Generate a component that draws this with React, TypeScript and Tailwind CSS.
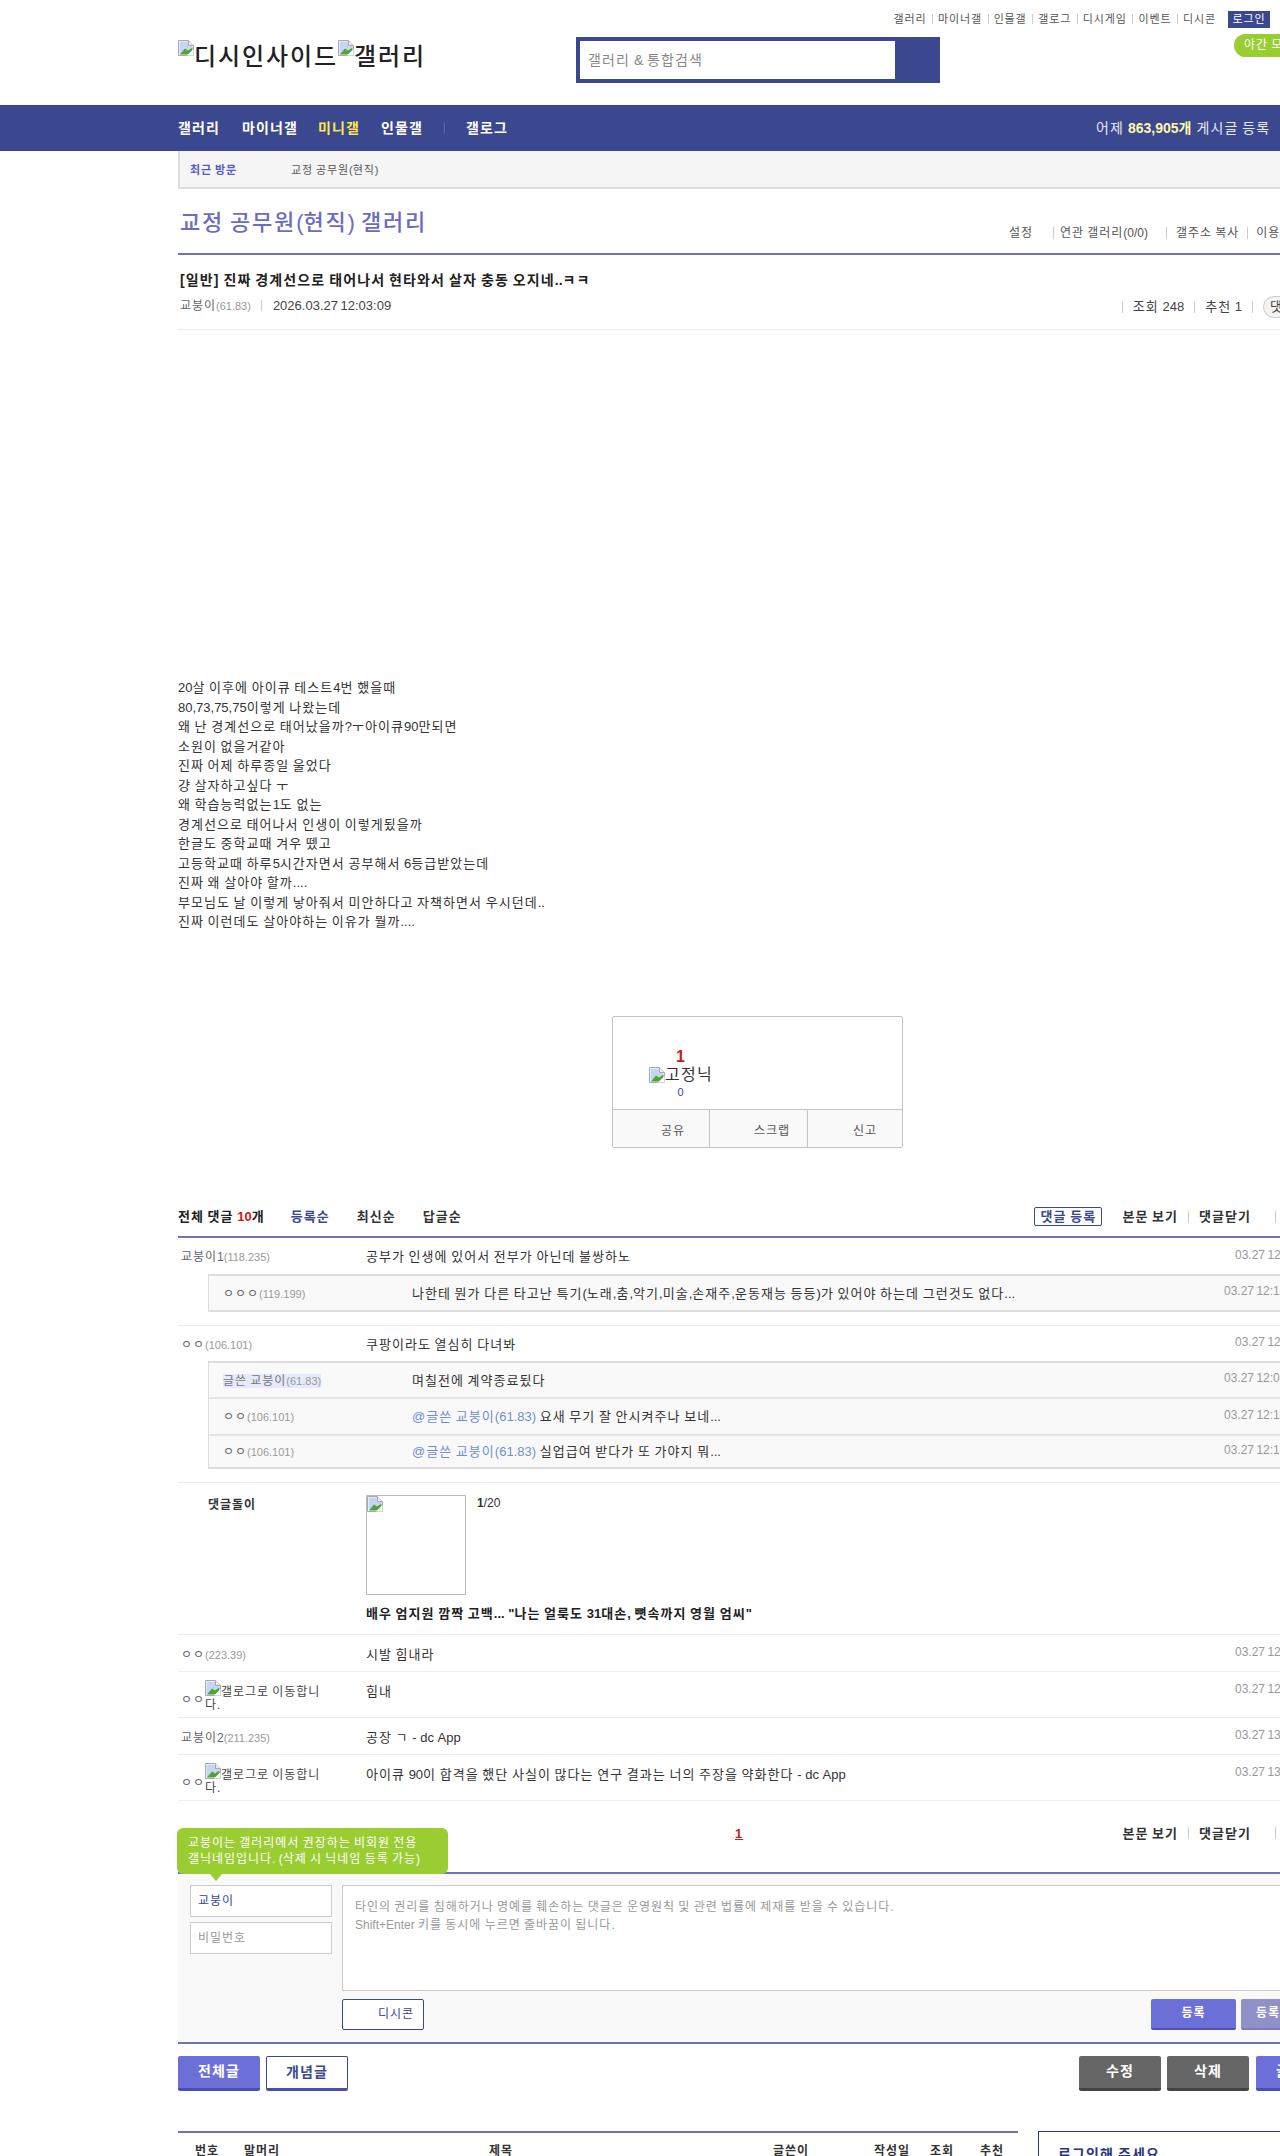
import type { ReactNode } from "react"

const BrokenImg = ({ className = "" }: { className?: string }) => (
  <svg width="16" height="16" viewBox="0 0 16 16" className={`inline-block shrink-0 align-baseline ${className}`}>
    <path d="M0.5 0.5H10.5L15.5 5.5V15.5H0.5Z" fill="#fff" stroke="#a9a9a9" />
    <path d="M1.5 1.5H10V6H14.5V9L9 14.5H1.5Z" fill="#c5d6f2" />
    <path d="M2 14.5L7 8.5L10 10.5L14.5 7.5V14.5Z" fill="#4ea33b" />
    <path d="M9 15.5L15.5 9V15.5Z" fill="#fff" />
    <path d="M10.5 0.5V5.5H15.5" fill="#eee" stroke="#a9a9a9" />
  </svg>
)

const Latin = ({ children }: { children: ReactNode }) => (
  <span className="!tracking-normal ![word-spacing:normal]">{children}</span>
)

const K = ({ t }: { t: string }) => (
  <>
    {t.split(/([0-9A-Za-z,.:&+\-()"/?]+)/).map((part, i) => (i % 2 ? <Latin key={i}>{part}</Latin> : part))}
  </>
)

const Sep = () => <span className="inline-block w-px h-[10px] bg-[#ccc]" />

const Name = ({ nick, ip }: { nick: string; ip: string }) => (
  <span className="text-[12px] text-[#666]">
    <K t={nick} />
    <span className="text-[11px] text-[#999] !tracking-normal">({ip})</span>
  </span>
)

const Row = ({ name, text, date, h = "h-[37px]" }: { name: ReactNode; text: string; date: string; h?: string }) => (
  <div className={`flex ${h} border-b border-[#eee] pl-[3px]`}>
    <div className="w-[185px] pt-[11px] leading-[18px]">{name}</div>
    <div className="flex-1 pt-[10px] text-[13px] leading-[19px] text-[#333]"><K t={text} /></div>
    <div className="w-[103px] pt-[9px] text-[12px] leading-[16px] text-[#999] !tracking-normal">{date}</div>
  </div>
)

const Reply = ({ name, text, date, h, last }: { name: ReactNode; text: ReactNode; date: string; h: string; last?: boolean }) => (
  <div className={`flex ${h} items-center pl-[14px] pt-[2px] ${last ? "" : "border-b-2 border-[#e5e5e5]"}`}>
    <div className="w-[189px]">{name}</div>
    <div className="flex-1 text-[13px] text-[#333]">{text}</div>
    <div className="w-[113px] -mt-[5px] text-[12px] text-[#999] !tracking-normal">{date}</div>
  </div>
)

const Mention = () => <span className="text-[#6f8fd0]"><K t="@글쓴 교붕이(61.83) " /></span>

const MovedName = () => (
  <div className="flex items-center text-[12px] text-[#666] -mt-[3px]">
    <span className="mt-[8px]">ㅇㅇ</span>
    <span className="w-[130px] text-[12px] leading-[13px] text-[#444]">
      <BrokenImg />갤로그로 이동합니다.
    </span>
  </div>
)

const topLinks = ["갤러리", "마이너갤", "인물갤", "갤로그", "디시게임", "이벤트", "디시콘"]

const ViewButtons = () => (
  <div className="flex items-center text-[13px] font-bold text-[#333]">
    <span>본문 보기</span>
    <span className="mx-[10px] h-[12px] w-px bg-[#ccc]" />
    <span>댓글닫기</span>
    <span className="ml-[24px] h-[12px] w-px bg-[#ccc]" />
    <span className="ml-[10px]">새로고침</span>
  </div>
)

const bodyLines = [
  "20살 이후에 아이큐 테스트4번 했을때",
  "80,73,75,75이렇게 나왔는데",
  "왜 난 경계선으로 태어났을까?ㅜ아이큐90만되면",
  "소원이 없을거같아",
  "진짜 어제 하루종일 울었다",
  "걍 살자하고싶다 ㅜ",
  "왜 학습능력없는1도 없는",
  "경계선으로 태어나서 인생이 이렇게됬을까",
  "한글도 중학교때 겨우 뗐고",
  "고등학교때 하루5시간자면서 공부해서 6등급받았는데",
  "진짜 왜 살아야 할까....",
  "부모님도 날 이렇게 낳아줘서 미안하다고 자책하면서 우시던데..",
  "진짜 이런데도 살아야하는 이유가 뭘까....",
]

export default function App() {
  return (
    <div className="h-[2156px] w-[1280px] overflow-hidden bg-white text-[13px] text-[#333] font-['Liberation_Sans','Noto_Sans_CJK_KR',sans-serif] [&_*]:tracking-[0.08em] [&_*]:[word-spacing:-0.08em]">
      {/* 헤더 */}
      <div className="h-[105px] pl-[178px]">
        <div className="relative w-[1160px]">
          <div className="flex h-[37px] w-[1092px] items-center justify-end gap-[5px] pb-[9px] pt-[10px] text-[11px] text-[#555]">
            {topLinks.map((t) => (
              <span key={t} className="flex items-center gap-[5.6px]">
                {t}
                {t !== "디시콘" && <Sep />}
              </span>
            ))}
            <span className="ml-[7px] flex h-[17px] w-[42px] items-center justify-center bg-[#3b4890] text-white">로그인</span>
          </div>
          <div className="absolute left-[1056px] top-[34px] h-[23px] w-[100px] rounded-l-[12px] bg-[#9acd32] pl-[10px] text-[12px] leading-[23px] text-white">야간 모드</div>
          <div className="flex items-start">
            <div className="flex w-[398px] items-start pt-[6px] text-[24px] font-medium leading-[28px] text-[#222]">
              <BrokenImg className="-mt-[3px]" />디시인사이드<BrokenImg className="-mt-[3px]" />갤러리
            </div>
            <div className="flex h-[46px] w-[364px] bg-[#3b4890] py-[4px] pl-[4px]">
              <div className="flex h-[38px] w-[315px] items-center bg-white pl-[8px] text-[14px] text-[#888]"><span><K t="갤러리 & 통합검색" /></span></div>
            </div>
          </div>
        </div>
      </div>

      {/* 내비 */}
      <div className="h-[46px] bg-[#3b4890] pl-[178px]">
        <div className="flex h-full w-[1160px] items-center text-[14px] font-bold text-white">
          <span>갤러리</span>
          <span className="ml-[22px]">마이너갤</span>
          <span className="ml-[20px] text-[#ffe94e]">미니갤</span>
          <span className="ml-[21px]">인물갤</span>
          <span className="ml-[21px] h-[12px] w-px bg-[#5a66a8]" />
          <span className="ml-[21px]">갤로그</span>
          <span className="ml-[588px] text-[14px] font-normal text-[#e8e8f5]">
            어제 <b className="text-[#fff7a8]"><K t="863,905개" /></b> 게시글 등록
          </span>
        </div>
      </div>

      <div className="pl-[178px]">
        <div className="w-[1160px]">
          {/* 최근 방문 */}
          <div className="flex h-[38px] items-center border-b-2 border-l-2 border-[#ddd] bg-[#f5f5f5] pl-[10px] pt-[2px] text-[11px]">
            <span className="w-[101px] font-bold text-[#5858c8]">최근 방문</span>
            <span className="text-[#555]"><K t="교정 공무원(현직)" /></span>
          </div>

          {/* 갤러리 타이틀 */}
          <div className="flex h-[66px] items-start border-b-2 border-[#7272b8] pl-[2px]">
            <h2 className="pt-[18px] text-[22px] font-medium leading-[32px] text-[#6b6bc2]"><K t="교정 공무원(현직) 갤러리" /></h2>
            <div className="flex items-center pl-[582px] pt-[37px] text-[12px] leading-[14px] text-[#555]">
              <span>설정</span>
              <span className="ml-[20px] mr-[6px] h-[12px] w-px bg-[#ccc]" />
              <span><K t="연관 갤러리(0/0)" /></span>
              <span className="ml-[18px] mr-[9px] h-[12px] w-px bg-[#ccc]" />
              <span>갤주소 복사</span>
              <span className="mx-[8px] h-[12px] w-px bg-[#ccc]" />
              <span>이용 안내</span>
            </div>
          </div>

          {/* 글 제목 */}
          <div className="flex h-[75px] flex-col border-b border-[#eee] pl-[2px]">
            <div className="pt-[15px] text-[14px] font-bold leading-[20px] text-[#222]"><K t="[일반] 진짜 경계선으로 태어나서 현타와서 살자 충동 오지네..ㅋㅋ" /></div>
            <div className="flex items-center pt-[3px]">
              <Name nick="교붕이" ip="61.83" />
              <span className="ml-[10px] mr-[11px] h-[11px] w-px bg-[#ccc]" />
              <span className="text-[13px] text-[#444] !tracking-normal">2026.03.27 12:03:09</span>
              <div className="ml-auto flex items-center pt-[3px] text-[13px] text-[#444]">
                <span className="h-[12px] w-px bg-[#ccc]" />
                <span className="mx-[10px]"><K t="조회 248" /></span>
                <span className="h-[12px] w-px bg-[#ccc]" />
                <span className="mx-[10px]"><K t="추천 1" /></span>
                <span className="h-[12px] w-px bg-[#ccc]" />
                <span className="ml-[10px] mr-[13px] flex h-[22px] w-[62px] items-center rounded-full border border-[#ccc] bg-[#f3f3f3] pl-[6px]"><span><K t="댓글 10" /></span></span>
              </div>
            </div>
          </div>

          {/* 본문 */}
          <div className="pt-[348px] text-[13px] leading-[19.5px] text-[#333]">
            {bodyLines.map((l) => (
              <p key={l}><K t={l} /></p>
            ))}
          </div>

          {/* 추천 박스 */}
          <div className="ml-[434px] mt-[84px] h-[132px] w-[291px] rounded-[2px] border border-[#c4c4c4]">
            <div className="flex h-[93px] flex-col items-center border-b border-[#c4c4c4] pr-[153px] pt-[30px]">
              <span className="text-[16px] font-bold leading-[20px] text-[#c8201a]">1</span>
              <span className="flex items-center text-[16px] leading-[16px] text-[#333]">
                <BrokenImg />고정닉
              </span>
              <span className="mt-[2px] text-[11px] leading-[14px] text-[#3b4890]">0</span>
            </div>
            <div className="flex h-[37px] bg-[#f9f9f9] pt-[6px] text-[12px] text-[#555]">
              <div className="-mt-[6px] flex w-[97px] items-center justify-end border-r border-[#c4c4c4] pr-[24px] pt-[6px]">공유</div>
              <div className="-mt-[6px] flex w-[98px] items-center justify-end border-r border-[#c4c4c4] pr-[17px] pt-[6px]">스크랩</div>
              <div className="-mt-[6px] flex flex-1 items-center justify-end pr-[25px] pt-[6px]">신고</div>
            </div>
          </div>

          {/* 댓글 헤더 */}
          <div className="mt-[50px] flex h-[40px] items-center border-b-2 border-[#7272b8] text-[13px] font-bold">
            <span className="text-[#222]">전체 댓글 <span className="text-[#c8201a] !tracking-normal">10</span>개</span>
            <span className="ml-[26px] text-[#3b4890]">등록순</span>
            <span className="ml-[27px] text-[#333]">최신순</span>
            <span className="ml-[27px] text-[#333]">답글순</span>
            <div className="ml-auto flex items-center">
              <span className="mr-[20px] flex h-[19px] w-[68px] items-center justify-center rounded-[2px] border border-[#3b4890] text-[#3b4890]">댓글 등록</span>
              <ViewButtons />
            </div>
          </div>

          {/* 댓글 목록 */}
          <div className="flex h-[36px] pl-[3px]">
            <div className="w-[185px] pt-[10px] leading-[18px]"><Name nick="교붕이1" ip="118.235" /></div>
            <div className="flex-1 pt-[9px] text-[13px] leading-[19px]">공부가 인생에 있어서 전부가 아닌데 불쌍하노</div>
            <div className="w-[103px] pt-[9px] text-[12px] leading-[16px] text-[#999] !tracking-normal">03.27 12:10:33</div>
          </div>
          <div className="ml-[30px] border-x border-y-2 border-[#ddd] bg-[#f9f9f9]">
            <Reply last h="h-[34px]" name={<Name nick="ㅇㅇㅇ" ip="119.199" />} text={<K t="나한테 뭔가 다른 타고난 특기(노래,춤,악기,미술,손재주,운동재능 등등)가 있어야 하는데 그런것도 없다..." />} date="03.27 12:13:22" />
          </div>
          <div className="mt-[13px] border-t border-[#eee]" />
          <div className="flex h-[35px] pl-[3px]">
            <div className="w-[185px] pt-[10px] leading-[18px]"><Name nick="ㅇㅇ" ip="106.101" /></div>
            <div className="flex-1 pt-[9px] text-[13px] leading-[19px]">쿠팡이라도 열심히 다녀봐</div>
            <div className="w-[103px] pt-[8px] text-[12px] leading-[16px] text-[#999] !tracking-normal">03.27 12:07:11</div>
          </div>
          <div className="ml-[30px] border-x border-y-2 border-[#ddd] bg-[#f9f9f9]">
            <Reply h="h-[36px]" name={<span className="bg-[#e5eafc] text-[12px] text-[#777]">글쓴 교붕이<span className="text-[11px] text-[#999] !tracking-normal">(61.83)</span></span>} text="며칠전에 계약종료됬다" date="03.27 12:09:44" />
            <Reply h="h-[37px]" name={<Name nick="ㅇㅇ" ip="106.101" />} text={<><Mention /><K t="요새 무기 잘 안시켜주나 보네..." /></>} date="03.27 12:11:02" />
            <Reply last h="h-[31px]" name={<Name nick="ㅇㅇ" ip="106.101" />} text={<><Mention /><K t="실업급여 받다가 또 가야지 뭐..." /></>} date="03.27 12:14:50" />
          </div>
          <div className="mt-[13px] border-t border-[#eee]" />

          {/* 댓글돌이 */}
          <div className="flex h-[152px] border-b border-[#eee] pt-[12px]">
            <div className="w-[188px] pl-[30px] pt-[2px] text-[12px] font-bold leading-[16px] text-[#333]">댓글돌이</div>
            <div>
              <div className="flex items-start">
                <div className="h-[100px] w-[100px] border border-[#bbb] leading-none"><BrokenImg /></div>
                <div className="ml-[11px] text-[12px] leading-[16px] !tracking-normal"><b className="!tracking-normal">1</b>/20</div>
              </div>
              <div className="mt-[9px] text-[13px] font-bold leading-[19px] text-[#222]"><K t={'배우 엄지원 깜짝 고백... "나는 얼룩도 31대손, 뼛속까지 영월 엄씨"'} /></div>
            </div>
          </div>
          <Row name={<Name nick="ㅇㅇ" ip="223.39" />} text="시발 힘내라" date="03.27 12:33:18" />
          <Row name={<MovedName />} text="힘내" date="03.27 12:48:07" h="h-[46px]" />
          <Row name={<Name nick="교붕이2" ip="211.235" />} text="공장 ㄱ - dc App" date="03.27 13:01:55" />
          <Row name={<MovedName />} text="아이큐 90이 합격을 했단 사실이 많다는 연구 결과는 너의 주장을 약화한다 - dc App" date="03.27 13:12:40" h="h-[46px]" />

          {/* 페이징 */}
          <div className="relative mt-[24px] flex h-[49px] items-start border-b-2 border-[#7272b8]">
            <span className="absolute left-[557px] -top-[1px] text-[13px] font-bold text-[#c8201a] underline">1</span>
            <div className="ml-auto -mt-[1px]"><ViewButtons /></div>
            <div className="absolute -left-[1px] top-[3px] z-10 w-[271px] rounded-[6px] bg-[#9acd32] px-[11px] py-[7px] text-[12px] leading-[16px] text-white">
              교붕이는 갤러리에서 권장하는 비회원 전용<br /><K t="갤닉네임입니다. (삭제 시 닉네임 등록 가능)" />
              <span className="absolute left-[33px] top-full h-0 w-0 border-x-[6px] border-t-[7px] border-x-transparent border-t-[#9acd32]" />
            </div>
          </div>

          {/* 댓글 입력 */}
          <div className="flex h-[170px] border-b-2 border-[#7272b8] bg-[#f9f9f9] pl-[12px] pt-[11px]">
            <div className="flex w-[152px] shrink-0 flex-col gap-[5px]">
              <div className="flex h-[32px] w-[142px] items-center border border-[#ccc] bg-white pl-[7px] text-[12px] text-[#3b4890]">교붕이</div>
              <div className="flex h-[32px] w-[142px] items-center border border-[#ccc] bg-white pl-[7px] text-[12px] text-[#999]">비밀번호</div>
            </div>
            <div className="flex-1">
              <div className="h-[106px] w-[990px] border border-[#ccc] bg-white px-[12px] pt-[12px] text-[12px] leading-[18px] text-[#999]">
                <K t="타인의 권리를 침해하거나 명예를 훼손하는 댓글은 운영원칙 및 관련 법률에 제재를 받을 수 있습니다." /><br /><K t="Shift+Enter 키를 동시에 누르면 줄바꿈이 됩니다." />
              </div>
              <div className="mt-[8px] flex h-[31px] items-stretch text-[12px] font-bold">
                <div className="flex w-[82px] items-center justify-end rounded-[2px] border border-[#3b4890] bg-white pr-[9px] font-normal text-[#3b4890]">디시콘</div>
                <div className="ml-[727px] flex w-[85px] items-center justify-center rounded-[2px] border-b-2 border-[#5050b0] bg-[#6d6fd9] text-white">등록</div>
                <div className="ml-[5px] flex w-[85px] items-center justify-center rounded-[2px] border-b-2 border-[#7a7cb8] bg-[#9091c9] text-white"><span><K t="등록+추천" /></span></div>
              </div>
            </div>
          </div>

          {/* 하단 버튼 */}
          <div className="mt-[12px] flex h-[35px] text-[14px] font-bold">
            <div className="flex w-[82px] items-center justify-center rounded-[2px] border-b-[3px] border-[#4c4cb4] bg-[#6d6fd9] text-white">전체글</div>
            <div className="ml-[6px] flex w-[82px] items-center justify-center rounded-[2px] border border-b-[3px] border-[#3b4890] border-b-[#4c4cb4] bg-white text-[#3b4890]">개념글</div>
            <div className="ml-[731px] flex w-[82px] items-center justify-center rounded-[2px] border-b-[3px] border-[#444] bg-[#666] text-white">수정</div>
            <div className="ml-[6px] flex w-[82px] items-center justify-center rounded-[2px] border-b-[3px] border-[#444] bg-[#666] text-white">삭제</div>
            <div className="ml-[7px] flex w-[82px] items-center justify-center rounded-[2px] border-b-[3px] border-[#4c4cb4] bg-[#6d6fd9] text-white">글쓰기</div>
          </div>

          {/* 목록 */}
          <div className="mt-[40px] flex items-start">
            <div className="h-[40px] w-[840px] border-t-2 border-[#7272b8] text-[12px] font-bold text-[#333]">
              <div className="flex pt-[9px] leading-[18px]">
                <span className="ml-[17px]">번호</span>
                <span className="ml-[25px]">말머리</span>
                <span className="ml-[209px]">제목</span>
                <span className="ml-[260px]">글쓴이</span>
                <span className="ml-[65px]">작성일</span>
                <span className="ml-[20px]">조회</span>
                <span className="ml-[26px]">추천</span>
              </div>
            </div>
            <div className="ml-[20px] h-[40px] w-[300px] border-l border-t border-[#29367c] pl-[19px] pt-[12px] text-[14px] font-bold leading-[20px] text-[#29367c]">로그인해 주세요.</div>
          </div>
        </div>
      </div>
    </div>
  )
}
